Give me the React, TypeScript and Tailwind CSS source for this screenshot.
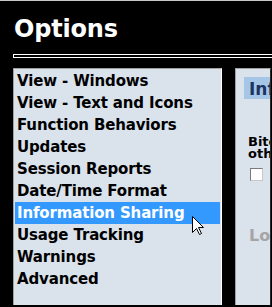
import React from "react";

const items = [
  "View - Windows",
  "View - Text and Icons",
  "Function Behaviors",
  "Updates",
  "Session Reports",
  "Date/Time Format",
  "Information Sharing",
  "Usage Tracking",
  "Warnings",
  "Advanced",
];

export default function App() {
  return (
    <div className="relative w-[272px] h-[307px] overflow-hidden bg-black border-t border-[#c8c8c8] font-['DejaVu_Sans',sans-serif]">
      <div className="pt-[14px] pl-[14px]">
        <h1 className="text-[24px] leading-[28px] font-bold text-white tracking-[-0.2px]">Options</h1>
      </div>
      <div className="mt-[11px] ml-[13px] h-[4px] w-[300px] border border-white" />
      <div className="mt-[10px] flex gap-[13px] pl-[13px]">
        <div className="w-[209px] h-[237px] bg-[#dae2ec] border-t border-l border-r border-t-[#a0a0a0] border-l-[#a0a0a0] border-r-white pt-[1px] px-[1px]">
          {items.map((it) => {
            const sel = it === "Information Sharing";
            return (
              <div
                key={it}
                className={
                  sel
                    ? "h-[22px] leading-[22px] pl-[2px] text-[15px] font-bold tracking-[-0.15px] whitespace-nowrap bg-[#3399ff] text-white"
                    : "h-[22px] leading-[22px] pl-[2px] text-[15px] font-bold tracking-[-0.15px] whitespace-nowrap text-black"
                }
              >
                {it}
              </div>
            );
          })}
        </div>
        <div className="w-[36px] h-[237px] bg-[#dae2ec] border-t border-l border-r border-t-[#a0a0a0] border-l-[#a0a0a0] border-r-[#2a2a2a] overflow-hidden">
          <div className="mt-[8px] ml-[8px] w-[200px] h-[22px] bg-[#a6c6e8] pl-[5px] pt-[1px] overflow-hidden">
            <div className="text-[17px] leading-[22px] font-bold text-[#1c3461] whitespace-nowrap">Information Sharing</div>
          </div>
          <div className="mt-[37px] ml-[12px] w-[200px] text-[13px] leading-[12px] font-bold text-black">
            <div className="whitespace-nowrap">Bitdefender</div>
            <div className="whitespace-nowrap">other</div>
          </div>
          <div className="mt-[8px] ml-[14px] w-[13px] h-[13px] bg-white border border-t-[#7a7a7a] border-l-[#7a7a7a] border-r-[#c8c8c8] border-b-[#c8c8c8]" />
          <div className="mt-[47px] ml-[13px] text-[16px] leading-[16px] font-bold text-[#a5a5a5] whitespace-nowrap">Location</div>
        </div>
      </div>
      <svg
        className="absolute left-[192px] top-[215px]"
        width="13"
        height="20"
        viewBox="0 0 13 20"
      >
        <path
          d="M0.5 0.5 L0.5 16.5 L4.5 12.5 L7.5 18.5 L9.5 17.5 L6.5 11.5 L11.5 11.5 Z"
          fill="white"
          stroke="black"
          strokeWidth="1"
          strokeLinejoin="miter"
        />
      </svg>
    </div>
  );
}
